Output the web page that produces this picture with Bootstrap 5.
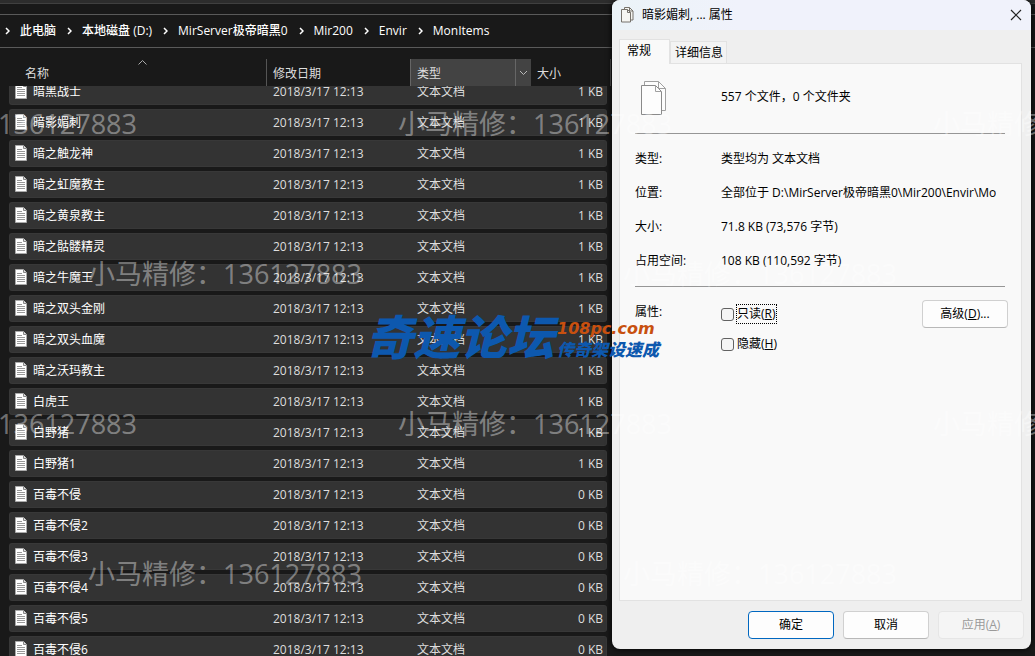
<!DOCTYPE html>
<html lang="zh-CN">
<head>
<meta charset="utf-8">
<meta name="viewport" content="width=device-width, initial-scale=1">
<title>MonItems</title>
<link href="https://cdn.jsdelivr.net/npm/bootstrap@5.3.0/dist/css/bootstrap.min.css" rel="stylesheet">
<style>
  body { font: 12px/18px "Open Sans", "Noto Sans CJK SC", sans-serif; background: #191919; color: #fff; }
  button { font: inherit; }
  .desktop { min-height: 100vh; height: 100vh; }

  /* explorer window */
  .topstrip { height: 4px; background: #2d2d2d; border-bottom: 1px solid #404040; }
  .crumbs { margin-top: 10px; height: 35px; padding-left: 5px; border-top: 1px solid #5a5a5a; border-bottom: 1px solid #5a5a5a; font-weight: 500; }
  .crumbs a { color: #fff; text-decoration: none; white-space: nowrap; }
  .crumbs ol { gap: 11px; }
  .crumbs li { gap: 10px; }
  .heads { margin-top: 11px; height: 27px; margin-left: 9px; width: 602px; color: #dedede; }
  .heads button { color: inherit; background: none; border: 0; border-right: 1px solid #555; padding: 2px 6px 0; text-align: left; }
  .heads .sorted { background: #434343; border: 0; border-left: 1px solid #666; border-right: 1px solid #666; }
  .heads .drop { background: #434343; width: 15px; padding: 0; border: 0; text-align: center; }
  .w-name { width: 258px; } .w-date { width: 143px; } .w-type { width: 106px; } .w-size { width: 80px; }
  .files { margin-left: 9px; min-height: 0; }
  .files table { width: 598px; table-layout: fixed; border-collapse: separate; border-spacing: 0 4px; margin-top: -12px; }
  .files td { height: 27px; padding: 1px 6px 0 7px; background: #333; border: solid #383838; border-width: 1px 0; color: #dedede; white-space: nowrap; }
  .files td:nth-child(2) { padding-left: 6px; }
  .files td:first-child { border-left-width: 1px; border-radius: 3px 0 0 3px; padding-left: 5px; color: #fff; }
  .files td:last-child { border-right-width: 1px; border-radius: 0 3px 3px 0; padding-right: 3px; text-align: right; }
  .files svg { margin: -4px 6px 0 0; }

  /* property dialog */
  .props { top: 0; right: 4px; bottom: 7px; width: 419px; background: #efefef; color: #000; border-radius: 8px; box-shadow: 0 0 6px #000; }
  .titlebar { height: 30px; padding: 0 9px; background: linear-gradient(90deg, #ebf3f8, #f0f2fb 30%); border-radius: 8px 8px 0 0; }
  .titlebar button { border: 0; background: none; padding: 0; line-height: 0; }
  .tabs { margin: 9px 9px 0 7px; }
  .tabs button { border: 1px solid #e2e2e2; border-bottom: 0; background: #f3f3f3; padding: 0 3px 0 4px; height: 22px; }
  .tabs .on { background: #f9f9f9; width: 51px; height: 25px; padding: 0 7px 3px; margin-bottom: -1px; text-align: left; z-index: 1; }
  .sheet { margin: 0 9px 0 7px; border: 1px solid #e2e2e2; background: #f9f9f9; padding: 0 13px 0 15px; }
  .summary { height: 69px; }
  .k { width: 86px; flex: none; }
  .rule { height: 1px; background: #969696; margin-right: 3px; }
  .facts { padding-top: 16px; }
  .facts > div { height: 34px; }
  .clip { overflow: hidden; white-space: nowrap; }
  .attrs { padding-top: 13px; }
  .attrs .k { padding-top: 3px; }
  .checks { gap: 10px; padding-top: 4px; }
  .checks input { appearance: none; width: 13px; height: 13px; margin: 0 2px 0 0; border: 1px solid #626262; border-radius: 3px; background: #f5f5f5; }
  .checks label { height: 20px; line-height: 18px; border: 1px solid transparent; }
  .checks .lit { border: 1px dotted #000; }
  .push { width: 86px; height: 28px; padding: 0; border: 1px solid #d0d0d0; border-bottom-color: #b8b8b8; border-radius: 4px; background: #fdfdfd; color: #000; }
  .push.main { border-color: #0067c0; }
  .push:disabled { background: #f5f5f5; border-color: #e6e6e6; color: #9a9a9a; }
  .actions { padding: 10px 7px; gap: 9px; }

  /* overprinted marks */
  .marks { inset: 0; padding-top: 49px; pointer-events: none; color: rgba(255,255,255,.4); font-size: 27px; }
  .marks div { height: 150px; margin-left: -137px; }
  .marks div:nth-child(even) { margin-left: 88px; }
  .marks span { width: 535px; flex: none; white-space: nowrap; }
  .forum { left: 366px; top: 311px; color: #0d58ae; font-family: "Noto Sans CJK SC", sans-serif; font-weight: 900; font-style: italic; pointer-events: none; white-space: nowrap; gap: 3px; }
  .forum .big { font-size: 47px; line-height: 48px; }
  .forum .site { color: #c8500f; font: italic bold 16px/19px "DejaVu Sans", sans-serif; }
  .forum .sub { font-size: 17px; line-height: 21px; }
</style>
</head>
<body>
<div class="desktop position-relative overflow-hidden d-flex flex-column">
  <div class="topstrip"></div>
  <nav class="crumbs d-flex align-items-center" aria-label="路径">
    <ol class="list-unstyled d-flex mb-0" id="crumbs"></ol>
  </nav>
  <div class="heads d-flex">
    <button class="w-name position-relative ps-3">名称<svg class="position-absolute top-0 start-50" width="9" height="6"><path d="M.5 5.500 4.500 1.500l4 4" fill="none" stroke="#aaa"/></svg></button>
    <button class="w-date border-end-0">修改日期</button>
    <button class="w-type sorted">类型</button>
    <button class="drop" aria-label="筛选"><svg width="9" height="6"><path d="M1 1l3.500 3.500L8 1" fill="none" stroke="#bbb"/></svg></button>
    <button class="w-size">大小</button>
  </div>
  <main class="files flex-fill overflow-hidden">
    <table aria-label="文件">
      <colgroup><col class="w-name"><col class="w-date"><col class="w-type"><col></colgroup>
      <tbody id="rows"></tbody>
    </table>
  </main>

  <section class="props position-absolute d-flex flex-column" role="dialog" aria-label="属性">
    <header class="titlebar d-flex align-items-center">
      <svg class="me-2" width="13" height="16" viewBox="0 0 13 16" fill="#f6f6f2" stroke="#77736c"><path d="M3.500 2.500v-2h5l3.500 3.500v9h-2.500"/><path d="M.5 2.500h6l3 3v9.500h-9z"/><path d="M6.500 2.500v3h3M8.500.5V4H12" fill="none"/></svg>
      <span class="me-auto">暗影媚刺, ... 属性</span>
      <button aria-label="关闭"><svg width="12" height="12"><path d="M1 1l10 10M11 1L1 11" stroke="#222" stroke-width="1.200"/></svg></button>
    </header>
    <div class="tabs d-flex align-items-end" role="tablist">
      <button class="on position-relative" role="tab" aria-selected="true">常规</button>
      <button role="tab" aria-selected="false">详细信息</button>
    </div>
    <div class="sheet flex-fill">
      <div class="summary d-flex">
        <div class="k pt-3"><svg style="" class="ms-1" width="28" height="36" viewBox="0 0 28 36" fill="#fdfdfd" stroke="#8a8a8a"><path d="M5.500 5.500v-4h14l7 7v22h-4" stroke="#a0a0a0"/><path d="M2.500 5.500h14l6 6v23h-20z"/><path d="M16.500 5.500v6h6M19.500 1.500v7h7" fill="none" stroke="#a0a0a0"/></svg></div>
        <div class="pt-4">557 个文件，0 个文件夹</div>
      </div>
      <div class="rule"></div>
      <div class="facts">
        <div class="d-flex"><span class="k">类型:</span><span>类型均为 文本文档</span></div>
        <div class="d-flex"><span class="k">位置:</span><span class="clip">全部位于 D:\MirServer极帝暗黑0\Mir200\Envir\Mo</span></div>
        <div class="d-flex"><span class="k">大小:</span><span>71.8 KB (73,576 字节)</span></div>
        <div class="d-flex"><span class="k">占用空间:</span><span>108 KB (110,592 字节)</span></div>
      </div>
      <div class="rule"></div>
      <div class="attrs d-flex align-items-start">
        <span class="k">属性:</span>
        <div class="checks d-flex flex-column me-auto">
          <div class="d-flex align-items-center"><input type="checkbox" id="ro"><label class="lit" for="ro">只读(<u>R</u>)</label></div>
          <div class="d-flex align-items-center"><input type="checkbox" id="hid"><label for="hid">隐藏(<u>H</u>)</label></div>
        </div>
        <button class="push">高级(<u>D</u>)...</button>
      </div>
    </div>
    <footer class="actions d-flex justify-content-end">
      <button class="push main">确定</button>
      <button class="push">取消</button>
      <button class="push" disabled>应用(<u>A</u>)</button>
    </footer>
  </section>

  <div class="marks position-absolute overflow-hidden" id="marks"></div>
  <div class="forum position-absolute d-flex">
    <span class="big">奇速论坛</span>
    <span class="d-flex flex-column pt-2"><span class="site">108pc.com</span><span class="sub">传奇架设速成</span></span>
  </div>
</div>
<script src="https://cdn.jsdelivr.net/npm/bootstrap@5.3.0/dist/js/bootstrap.bundle.min.js"></script>
<script>
  const chevron = '<svg width="5" height="8"><path d="M1 1l3 3-3 3" fill="none" stroke="#fff" stroke-width="1.500"/></svg>';
  document.getElementById('crumbs').innerHTML =
    ['此电脑', '本地磁盘 (D:)', 'MirServer极帝暗黑0', 'Mir200', 'Envir', 'MonItems']
      .map(t => `<li class="d-flex align-items-center">${chevron}<a href="#">${t}</a></li>`).join('');

  const icon = '<svg width="12" height="16" viewBox="0 0 12 16"><path d="M.5.5h8l3 3v12H.5z" fill="#fff" stroke="#aaa"/><path d="M8.500.5v3h3" fill="#ddd" stroke="#888"/><path d="M2 4.500h5M2 6.500h8M2 8.500h8M2 10.500h8M2 12.500h8" stroke="#999"/></svg>';
  const names = ['暗黑战士', '暗影媚刺', '暗之触龙神', '暗之虹魔教主', '暗之黄泉教主', '暗之骷髅精灵', '暗之牛魔王', '暗之双头金刚', '暗之双头血魔', '暗之沃玛教主', '白虎王', '白野猪', '白野猪1', '百毒不侵', '百毒不侵2', '百毒不侵3', '百毒不侵4', '百毒不侵5', '百毒不侵6'];
  document.getElementById('rows').innerHTML = names.map((n, i) =>
    `<tr><td>${icon}${n}</td><td>2018/3/17 12:13</td><td>文本文档</td><td>${i < 13 ? 1 : 0} KB</td></tr>`).join('');

  const mark = '<span>小马精修：136127883</span>';
  document.getElementById('marks').innerHTML =
    [3, 2, 3, 2].map(n => `<div class="d-flex align-items-center">${mark.repeat(n)}</div>`).join('');
</script>
</body>
</html>
